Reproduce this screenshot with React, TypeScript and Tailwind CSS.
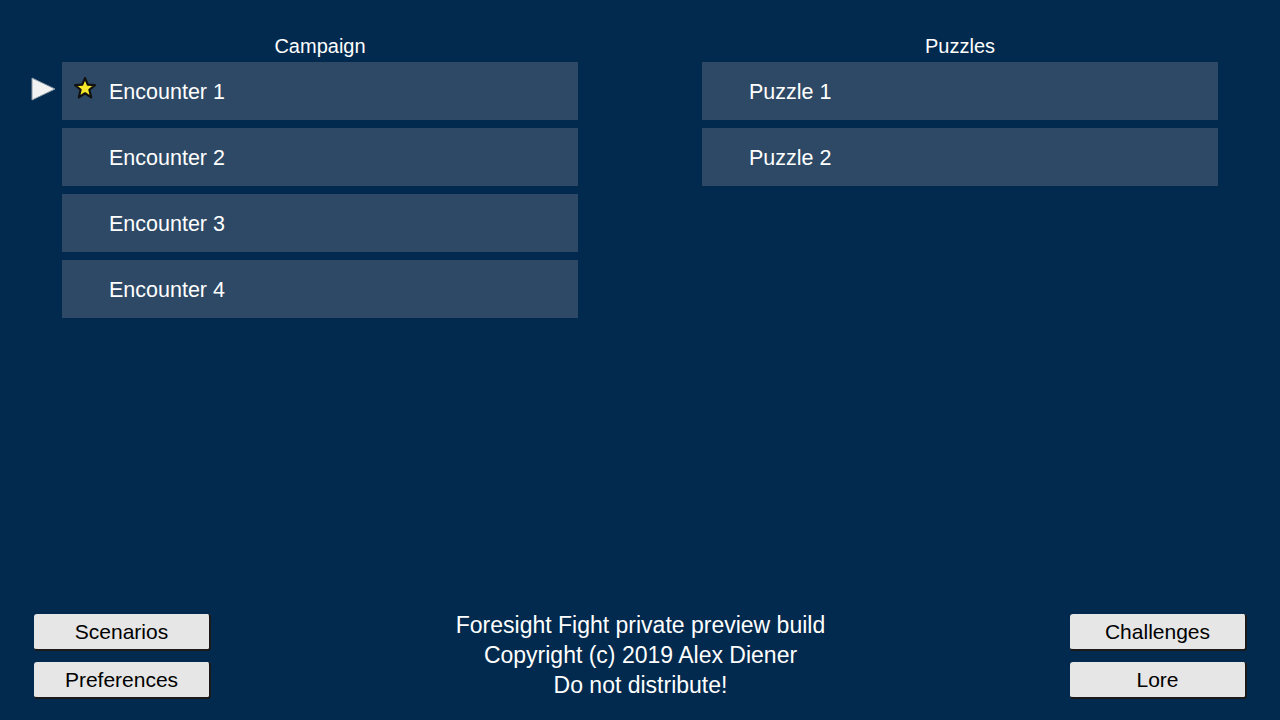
const campaign = ["Encounter 1", "Encounter 2", "Encounter 3", "Encounter 4"];
const puzzles = ["Puzzle 1", "Puzzle 2"];

function Star() {
  return (
    <svg width="22" height="22" viewBox="0 0 20 20" className="absolute left-[12px] top-[15px]">
      <polygon
        points="10,1 12.6,7 19,7.4 14,11.6 15.6,18.5 10,14.8 4.4,18.5 6,11.6 1,7.4 7.4,7"
        fill="#f5e82a"
        stroke="#111"
        strokeWidth="2"
        strokeLinejoin="round"
      />
    </svg>
  );
}

function Arrow() {
  return (
    <svg width="26" height="24" viewBox="0 0 26 24" className="absolute -left-[31px] top-[15px]">
      <polygon points="1,1 24,12 1,23" fill="#f2f2f2" stroke="#8a9aa8" strokeWidth="1" />
    </svg>
  );
}

function Row({ label, selected, star }: { label: string; selected?: boolean; star?: boolean }) {
  return (
    <div className="relative h-[58px] bg-[#2d4965] flex items-center pl-[47px] pt-[2px] text-[21.5px] text-white">
      {selected && <Arrow />}
      {star && <Star />}
      <span>{label}</span>
    </div>
  );
}

function Column({ title, items }: { title: string; items: string[] }) {
  return (
    <div className="flex flex-col">
      <div className="h-[30px] mb-[2px] flex items-end justify-center text-[20px] text-white leading-none pb-[4px]">
        {title}
      </div>
      <div className="flex flex-col gap-[8px]">
        {items.map((it, i) => (
          <Row key={it} label={it} selected={title === "Campaign" && i === 0} star={title === "Campaign" && i === 0} />
        ))}
      </div>
    </div>
  );
}

function Btn({ children }: { children: string }) {
  return (
    <button className="w-[177px] h-[37px] bg-[#e6e6e6] rounded-[3px] border-r-2 border-b-2 border-[#1a1a1a] text-[21px] text-black flex items-center justify-center">
      {children}
    </button>
  );
}

export default function App() {
  return (
    <div
      className="w-[1280px] h-[720px] bg-[#022a4e] flex flex-col overflow-hidden"
      style={{ fontFamily: '"Liberation Sans", Arial, sans-serif' }}
    >
      <div className="grid grid-cols-2 gap-[124px] px-[62px] pt-[30px]">
        <Column title="Campaign" items={campaign} />
        <Column title="Puzzles" items={puzzles} />
      </div>

      <div className="mt-auto flex items-end justify-between pl-[34px] pr-[33px] pb-[21px]">
        <div className="flex flex-col gap-[11px]">
          <Btn>Scenarios</Btn>
          <Btn>Preferences</Btn>
        </div>
        <div className="flex flex-col items-center text-white text-[23px] leading-[30px] mb-[-1px]">
          <span>Foresight Fight private preview build</span>
          <span>Copyright (c) 2019 Alex Diener</span>
          <span>Do not distribute!</span>
        </div>
        <div className="flex flex-col gap-[11px]">
          <Btn>Challenges</Btn>
          <Btn>Lore</Btn>
        </div>
      </div>
    </div>
  );
}
